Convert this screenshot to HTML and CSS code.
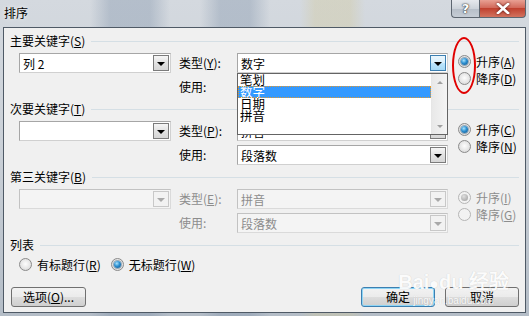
FILE: index.html
```html
<!DOCTYPE html>
<html lang="zh-CN">
<head>
<meta charset="utf-8">
<title>排序</title>
<link rel="stylesheet" href="styles.css">
</head>
<body>
<div class="window">
  <div class="titlebar">
    <span class="title">排序</span>
    <div class="caption">
      <div class="cbtn help">?</div>
      <div class="cbtn close">
        <svg width="14" height="11" viewBox="0 0 14 11"><path d="M2 1 L12 10 M12 1 L2 10" stroke="#fff" stroke-width="2.6" stroke-linecap="square"/></svg>
      </div>
    </div>
  </div>

  <div class="client">
    <section class="group">
      <div class="group-head"><span>主要关键字(<u>S</u>)</span><i class="rule"></i></div>
      <div class="group-body">
        <div class="combo"><span class="val">列 2</span><span class="dbtn"><b class="tri"></b></span></div>
        <label class="lbl">类型(<u>Y</u>):</label>
        <div class="combo open"><span class="val">数字</span><span class="dbtn hot"><b class="tri"></b></span>
          <div class="droplist">
            <ul class="items">
              <li>笔划</li>
              <li class="sel">数字</li>
              <li>日期</li>
              <li>拼音</li>
            </ul>
            <div class="vscroll"><b class="arr up"></b><b class="arr down"></b></div>
          </div>
        </div>
        <div class="radios">
          <div class="radio"><span class="dot on"></span>升序(<u>A</u>)</div>
          <div class="radio"><span class="dot"></span>降序(<u>D</u>)</div>
        </div>
        <span></span>
        <label class="lbl">使用:</label>
        <div class="combo"><span class="val">段落数</span><span class="dbtn"><b class="tri"></b></span></div>
      </div>
    </section>

    <section class="group">
      <div class="group-head"><span>次要关键字(<u>T</u>)</span><i class="rule"></i></div>
      <div class="group-body">
        <div class="combo"><span class="val"></span><span class="dbtn"><b class="tri"></b></span></div>
        <label class="lbl">类型(<u>P</u>):</label>
        <div class="combo"><span class="val">拼音</span><span class="dbtn"><b class="tri"></b></span></div>
        <div class="radios">
          <div class="radio"><span class="dot on"></span>升序(<u>C</u>)</div>
          <div class="radio"><span class="dot"></span>降序(<u>N</u>)</div>
        </div>
        <span></span>
        <label class="lbl">使用:</label>
        <div class="combo"><span class="val">段落数</span><span class="dbtn"><b class="tri"></b></span></div>
      </div>
    </section>

    <section class="group disabled">
      <div class="group-head"><span class="head-text">第三关键字(<u>B</u>)</span><i class="rule"></i></div>
      <div class="group-body">
        <div class="combo"><span class="val"></span><span class="dbtn"><b class="tri"></b></span></div>
        <label class="lbl">类型(<u>E</u>):</label>
        <div class="combo"><span class="val">拼音</span><span class="dbtn"><b class="tri"></b></span></div>
        <div class="radios">
          <div class="radio"><span class="dot on"></span>升序(<u>I</u>)</div>
          <div class="radio"><span class="dot"></span>降序(<u>G</u>)</div>
        </div>
        <span></span>
        <label class="lbl">使用:</label>
        <div class="combo"><span class="val">段落数</span><span class="dbtn"><b class="tri"></b></span></div>
      </div>
    </section>

    <section class="group list-group">
      <div class="group-head"><span>列表</span><i class="rule"></i></div>
      <div class="hrow">
        <div class="radio"><span class="dot"></span>有标题行(<u>R</u>)</div>
        <div class="radio"><span class="dot on"></span>无标题行(<u>W</u>)</div>
      </div>
    </section>

    <div class="footer">
      <button class="btn">选项(<u>O</u>)...</button>
      <span class="spacer"></span>
      <button class="btn default">确定</button>
      <button class="btn">取消</button>
    </div>

    <div class="watermark"><span class="wm-big">Bai<span class="paw">●</span>du 经验</span><span class="wm-small">jingyan.baidu.com</span></div>
  </div>

  <div class="annot"></div>
</div>
</body>
</html>
```

FILE: styles.css
```css
* { box-sizing: border-box; margin: 0; padding: 0; }
html, body { width: 529px; height: 316px; overflow: hidden; }
body {
  font-family: "Noto Sans CJK SC", "Noto Sans", sans-serif;
  font-size: 12px;
  color: #000;
  background: #b8c0ca;
}
u { text-decoration: underline; text-underline-offset: 1px; }

.window {
  position: relative;
  width: 529px;
  height: 316px;
  display: flex;
  flex-direction: column;
  background:
    linear-gradient(90deg, transparent 0 90px, rgba(120,140,165,.35) 110px 150px, transparent 170px 200px, rgba(120,140,165,.35) 220px 250px, transparent 270px 300px, rgba(210,200,150,.35) 315px 350px, transparent 365px),
    linear-gradient(180deg, #d4d9df 0%, #cbd1d8 45%, #b4bdc7 100%);
}

.titlebar {
  height: 27px;
  display: flex;
  align-items: flex-start;
  flex: none;
}
.title {
  margin: 6px 0 0 4px;
  line-height: 14px;
  font-size: 12px;
  text-shadow: 0 0 4px rgba(255,255,255,.9);
}
.caption {
  margin-left: auto;
  margin-right: 3px;
  display: flex;
  height: 18px;
}
.cbtn {
  height: 18px;
  display: flex;
  align-items: center;
  justify-content: center;
  border: 1px solid #5d6670;
  border-top: none;
}
.help {
  width: 28px;
  border-radius: 0 0 0 4px;
  border-right: none;
  background: linear-gradient(180deg, #e6e9ed 0%, #cdd3da 50%, #b6bec8 51%, #c6cdd5 100%);
  color: #fff;
  font-family: "DejaVu Sans", sans-serif;
  font-weight: bold;
  font-size: 13px;
  text-shadow: 0 0 2px #333, 0 0 1px #000;
}
.close {
  width: 47px;
  border-radius: 0 0 4px 0;
  background: linear-gradient(180deg, #e8a093 0%, #d26a5b 45%, #c0412f 50%, #d3735f 100%);
}
.close svg { filter: drop-shadow(0 0 1px rgba(60,0,0,.9)); }

.client {
  position: relative;
  flex: 1;
  margin: 0 3px 3px 3px;
  background: #f0f0f0;
  border: 1px solid #4f5a66;
  display: flex;
  flex-direction: column;
  padding: 6px 6px 5px 6px;
}

.group { margin-bottom: 5px; }
.group-head {
  display: flex;
  align-items: center;
  height: 14px;
  line-height: 14px;
}
.rule {
  flex: 1;
  height: 1px;
  margin-left: 6px;
  background: #d5dfe5;
}

.group-body {
  display: grid;
  grid-template-columns: 152px 50px 211px auto;
  grid-template-rows: 20px 20px;
  column-gap: 8px;
  row-gap: 4px;
  margin-top: 5px;
  padding-left: 9px;
  align-items: center;
}
.lbl { line-height: 14px; white-space: nowrap; }

.combo {
  position: relative;
  height: 20px;
  display: flex;
  align-items: center;
  background: #fff;
  border: 1px solid #a6a6a6;
  border-color: #a6a6a6 #d0d0d0 #d0d0d0 #a6a6a6;
}
.combo .val { flex: 1; padding-left: 3px; line-height: 17px; white-space: nowrap; }
.dbtn {
  width: 16px;
  height: 16px;
  margin-right: 1px;
  border: 1px solid #7b7b7b;
  background: linear-gradient(180deg, #f6f6f6 0%, #e2e2e2 50%, #d6d6d6 100%);
  display: flex;
  align-items: center;
  justify-content: center;
}
.dbtn.hot {
  border-color: #3c7fb1;
  background: linear-gradient(180deg, #eaf6fd 0%, #d9f0fc 50%, #bee6fd 51%, #a7d9f5 100%);
}
.tri {
  width: 0; height: 0;
  border-left: 4px solid transparent;
  border-right: 4px solid transparent;
  border-top: 4px solid #000;
  margin-top: 1px;
}

.radios {
  grid-row: 1 / span 2;
  grid-column: 4;
  align-self: start;
  display: flex;
  flex-direction: column;
}
.radio {
  display: flex;
  align-items: center;
  height: 17px;
  line-height: 14px;
  white-space: nowrap;
}
.dot {
  width: 13px;
  height: 13px;
  border-radius: 50%;
  border: 1px solid #8a8a8a;
  background: radial-gradient(circle at 50% 45%, #fdfdfd 0%, #e6e6e6 55%, #cfcfcf 100%);
  margin: 0 5px 0 2px;
  flex: none;
  display: flex;
  align-items: center;
  justify-content: center;
}
.dot.on::after {
  content: "";
  width: 7px;
  height: 7px;
  border-radius: 50%;
  background: radial-gradient(circle at 40% 35%, #a8e4ff 0%, #2d8fd0 45%, #0d4f86 100%);
  box-shadow: 0 0 0 1px rgba(20,70,110,.4);
}

/* dropdown list overlay */
.droplist {
  position: absolute;
  left: -1px;
  top: 19px;
  width: 211px;
  height: 62px;
  background: #fff;
  border: 1px solid #646464;
  display: flex;
  z-index: 5;
}
.items { list-style: none; flex: 1; overflow: hidden; }
.items li {
  height: 12px;
  line-height: 12px;
  padding-left: 2px;
  font-size: 12.5px;
  white-space: nowrap;
}
.items li.sel {
  background: #3399ff;
  color: #fff;
  outline: 1px dotted #e2982e;
  outline-offset: -1px;
}
.vscroll {
  width: 16px;
  background: linear-gradient(90deg, #e8e8e8, #f4f4f4);
  border-left: 1px solid #e6e6e6;
  display: flex;
  flex-direction: column;
  justify-content: space-between;
  align-items: center;
  padding: 7px 0 6px;
}
.arr { width: 0; height: 0; border-left: 3px solid transparent; border-right: 3px solid transparent; }
.arr.up { border-bottom: 3px solid #a0a0a0; }
.arr.down { border-top: 3px solid #a0a0a0; }

/* disabled section */
.disabled .group-body { color: #8d8d8d; }
.disabled .combo { background: #f4f4f4; border-color: #c2c2c2 #dadada #dadada #c2c2c2; }
.disabled .dbtn { border-color: #c8c8c8; background: #f2f2f2; }
.disabled .tri { border-top-color: #a9a9a9; }
.disabled .dot { border-color: #b5b5b5; background: #f2f2f2; }
.disabled .dot.on::after { background: radial-gradient(circle at 40% 35%, #e0e0e0, #9a9a9a); box-shadow: none; }

.list-group .hrow {
  display: flex;
  gap: 8px;
  margin-top: 4px;
  padding-left: 7px;
}

.footer {
  margin-top: auto;
  display: flex;
  gap: 10px;
  padding-left: 1px;
}
.spacer { flex: 1; }
.btn {
  font: inherit;
  width: 74px;
  height: 20px;
  line-height: 14px;
  border: 1px solid #707070;
  border-radius: 3px;
  background: linear-gradient(180deg, #f2f2f2 0%, #ebebeb 50%, #dddddd 51%, #cfcfcf 100%);
  color: #000;
}
.footer .btn:first-child { width: 75px; }
.btn.default {
  border-color: #3c7fb1;
  box-shadow: inset 0 0 0 1px #8fd5f5;
}

.watermark {
  position: absolute;
  right: 16px;
  bottom: 6px;
  display: flex;
  flex-direction: column;
  align-items: center;
  color: rgba(255,255,255,.95);
  text-shadow: 0 0 1px rgba(0,0,0,.18);
  pointer-events: none;
  font-family: "Liberation Sans", sans-serif;
}
.wm-big { font-size: 20px; font-weight: bold; line-height: 22px; }
.paw { font-size: 16px; }
.wm-small { font-size: 10px; line-height: 11px; }

.annot {
  position: absolute;
  left: 452px;
  top: 37px;
  width: 24px;
  height: 57px;
  border: 2px solid #e00000;
  border-radius: 50%;
}
```
